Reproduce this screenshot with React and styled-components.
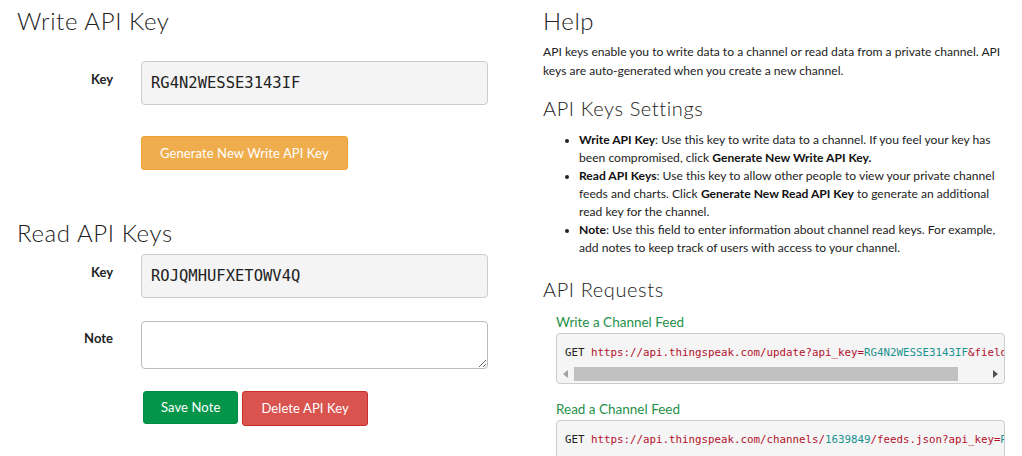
import React from "react";
import styled, { createGlobalStyle } from "styled-components";

const GlobalStyle = createGlobalStyle`
  body {
    margin: 0;
    background: #fff;
    color: #333;
    font-family: "Lato", "Liberation Sans", sans-serif;
  }
`;

const Page = styled.div`
  display: grid;
  grid-template-columns: 528px minmax(0, 1fr);
  width: 1022px;
  height: 456px;
  overflow: hidden;
`;

const LeftColumn = styled.div`
  padding: 0 17px;
`;

const RightColumn = styled.div`
  min-width: 0;
  padding: 0 17px 0 15px;
`;

const Heading = styled.h2`
  font-family: "Lato", "Liberation Sans", sans-serif;
  font-weight: 300;
  font-size: ${({ size }) => size || 24}px;
  letter-spacing: 0.6px;
  color: #222;
  margin: ${({ m }) => m || "0"};
  line-height: 1.1;
`;

const FormRow = styled.div`
  display: grid;
  grid-template-columns: 124px 347px;
  margin-bottom: ${({ mb }) => mb || 0}px;
`;

const Label = styled.label`
  text-align: right;
  padding-right: 28px;
  padding-top: ${({ pt }) => pt || 10}px;
  font-weight: 700;
  font-size: 13px;
  color: #222;
`;

const KeyField = styled.div`
  height: 44px;
  box-sizing: border-box;
  border: 1px solid #ccc;
  border-radius: 4px;
  background: #f4f4f4;
  padding: 0 9px;
  display: flex;
  align-items: center;
  font-family: "DejaVu Sans Mono", "Liberation Mono", monospace;
  font-size: 15.5px;
  color: #222;
`;

const NoteArea = styled.textarea`
  height: 48px;
  box-sizing: border-box;
  border: 1px solid #bbb;
  border-radius: 4px;
  background: #fff;
  resize: vertical;
  font-family: inherit;
  margin: 0;
`;

const ButtonBar = styled.div`
  display: flex;
  align-items: flex-start;
  gap: 4px;
  grid-column: 2;
  padding-left: ${({ pl }) => pl || 0}px;
`;

const Button = styled.button`
  height: ${({ h }) => h || 34}px;
  padding: 0 ${({ px }) => px || 18}px;
  border: 1px solid ${({ border }) => border};
  background: ${({ bg }) => bg};
  color: #fff;
  border-radius: 3px;
  font-family: "Lato", "Liberation Sans", sans-serif;
  font-size: 13px;
  letter-spacing: 0.1px;
  cursor: pointer;
`;

const Paragraph = styled.p`
  font-size: 12.1px;
  line-height: 19px;
  color: #222;
  margin: 0;
`;

const List = styled.ul`
  margin: 0;
  padding-left: 36px;
  font-size: 12.1px;
  line-height: 18px;
  color: #222;

  li::marker {
    font-size: 11px;
  }

  b {
    font-weight: 700;
    color: #111;
  }
`;

const Requests = styled.div`
  padding-left: 13px;
`;

const FeedTitle = styled.div`
  color: #1f9149;
  font-size: 13.5px;
  margin: ${({ m }) => m || "0"};
`;

const CodeBox = styled.div`
  border: 1px solid #ccc;
  border-radius: 4px;
  background: #f5f5f5;
  overflow: hidden;
`;

const CodeLine = styled.div`
  font-family: "DejaVu Sans Mono", "Liberation Mono", monospace;
  font-size: 10.8px;
  white-space: nowrap;
  padding: 12px 8px 7px;
  color: #222;
`;

const Url = styled.span`
  color: #b3112c;
`;

const Val = styled.span`
  color: #1b9291;
`;

const ScrollBar = styled.div`
  display: flex;
  align-items: center;
  height: 15px;
  margin-bottom: 2px;
`;

const Arrow = styled.div`
  width: 17px;
  display: flex;
  justify-content: center;
`;

const Thumb = styled.div`
  height: 14px;
  width: 384px;
  background: #c1c1c1;
`;

const Track = styled.div`
  flex: 1;
`;

const ArrowIcon = ({ dir, color }) => (
  <svg width="5" height="8" viewBox="0 0 5 8">
    {dir === "left" ? (
      <path d="M5 0 L0 4 L5 8 Z" fill={color} />
    ) : (
      <path d="M0 0 L5 4 L0 8 Z" fill={color} />
    )}
  </svg>
);

export default function App() {
  return (
    <>
      <GlobalStyle />
      <Page>
        <LeftColumn>
          <Heading m="8px 0 27px">Write API Key</Heading>
          <FormRow mb={31}>
            <Label>Key</Label>
            <KeyField>RG4N2WESSE3143IF</KeyField>
          </FormRow>
          <FormRow>
            <ButtonBar>
              <Button bg="#f0ad4e" border="#eea236" px={18}>
                Generate New Write API Key
              </Button>
            </ButtonBar>
          </FormRow>
          <Heading m="50px 0 7px">Read API Keys</Heading>
          <FormRow mb={23}>
            <Label>Key</Label>
            <KeyField>ROJQMHUFXETOWV4Q</KeyField>
          </FormRow>
          <FormRow mb={22}>
            <Label pt={9}>Note</Label>
            <NoteArea />
          </FormRow>
          <FormRow>
            <ButtonBar pl={2}>
              <Button bg="#03964a" border="#028a43" h={33} px={17}>
                Save Note
              </Button>
              <Button bg="#d9534f" border="#c9302c" h={35} px={18}>
                Delete API Key
              </Button>
            </ButtonBar>
          </FormRow>
        </LeftColumn>
        <RightColumn>
          <Heading m="8px 0 8px">Help</Heading>
          <Paragraph>
            API keys enable you to write data to a channel or read data from a
            private channel. API keys are auto-generated when you create a new
            channel.
          </Paragraph>
          <Heading size={20} m="17px 0 12px">API Keys Settings</Heading>
          <List>
            <li>
              <b>Write API Key</b>: Use this key to write data to a channel. If
              you feel your key has been compromised, click{" "}
              <b>Generate New Write API Key.</b>
            </li>
            <li>
              <b>Read API Keys</b>: Use this key to allow other people to view
              your private channel feeds and charts. Click{" "}
              <b>Generate New Read API Key</b> to generate an additional read
              key for the channel.
            </li>
            <li>
              <b>Note</b>: Use this field to enter information about channel
              read keys. For example, add notes to keep track of users with
              access to your channel.
            </li>
          </List>
          <Heading size={20} m="21px 0 14px">API Requests</Heading>
          <Requests>
            <FeedTitle m="0 0 3px">Write a Channel Feed</FeedTitle>
            <CodeBox>
              <CodeLine>
                GET{" "}
                <Url>
                  https://api.thingspeak.com/update?api_key=
                  <Val>RG4N2WESSE3143IF</Val>&field1=0
                </Url>
              </CodeLine>
              <ScrollBar>
                <Arrow>
                  <ArrowIcon dir="left" color="#a3a3a3" />
                </Arrow>
                <Thumb />
                <Track />
                <Arrow>
                  <ArrowIcon dir="right" color="#505050" />
                </Arrow>
              </ScrollBar>
            </CodeBox>
            <FeedTitle m="17px 0 3px">Read a Channel Feed</FeedTitle>
            <CodeBox>
              <CodeLine>
                GET{" "}
                <Url>
                  https://api.thingspeak.com/channels/<Val>1639849</Val>
                  /feeds.json?api_key=<Val>ROJQMHUFXETOWV4Q</Val>&results=2
                </Url>
              </CodeLine>
              <ScrollBar />
            </CodeBox>
          </Requests>
        </RightColumn>
      </Page>
    </>
  );
}
